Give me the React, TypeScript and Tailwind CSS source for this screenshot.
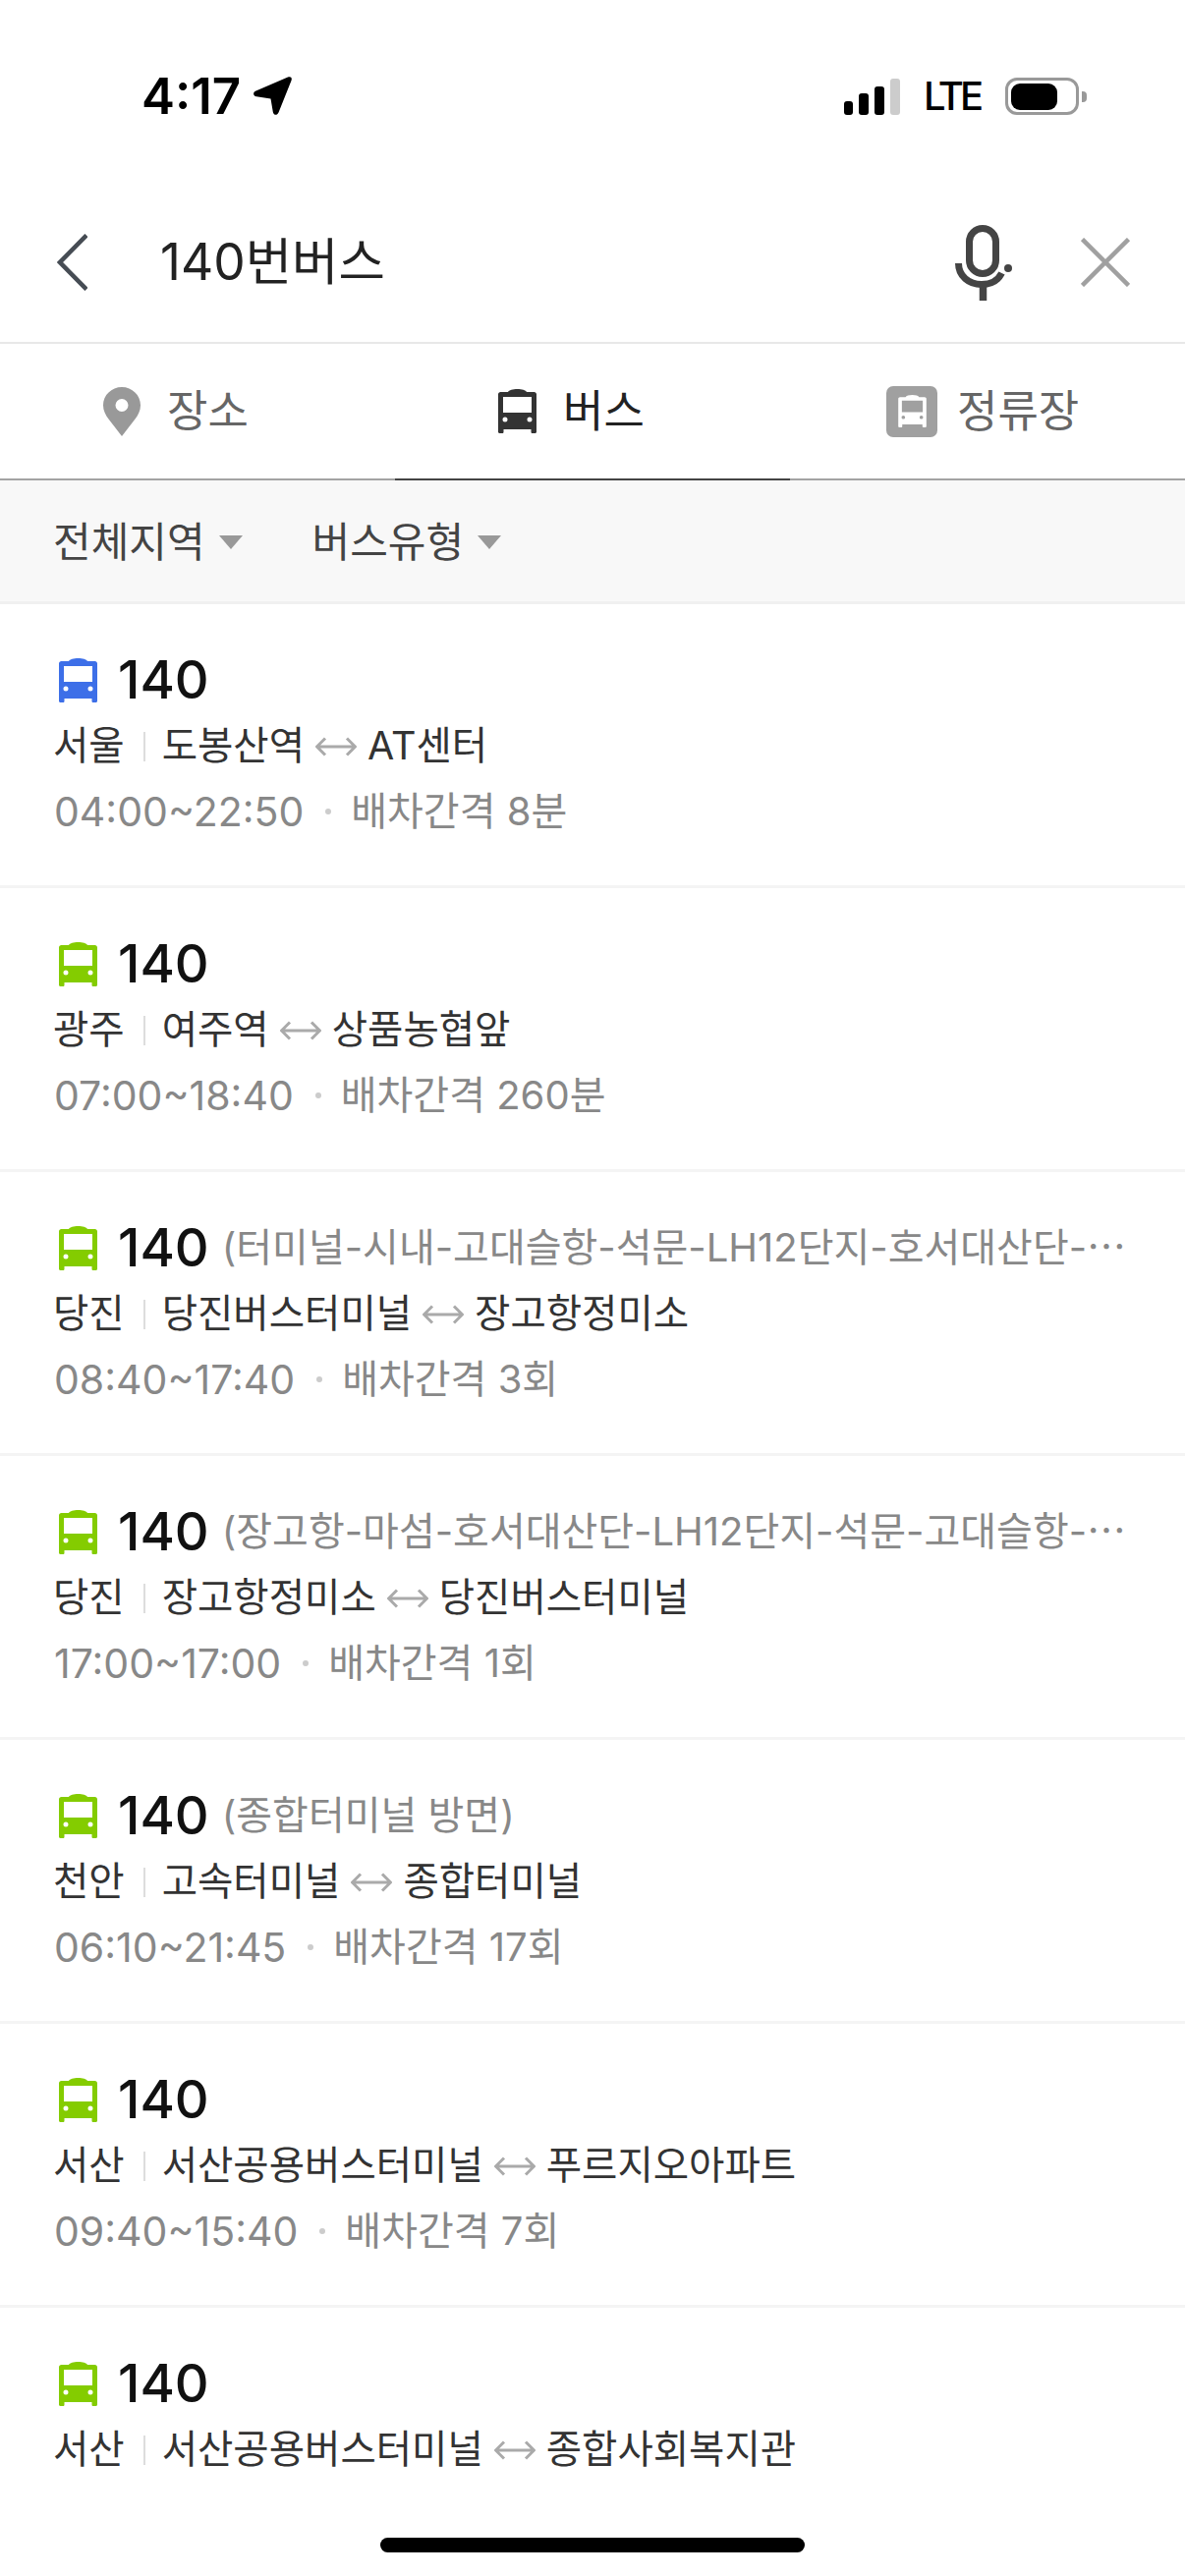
import React from 'react';

const FONT = 'font-[Inter,"Noto_Sans_CJK_KR",sans-serif]';

interface RouteRow {
  color: string;
  region: string;
  from: string;
  to: string;
  note?: string;
  time?: string;
  interval?: string;
}

const GREEN = 'text-[#84cc00]';

const rows: RouteRow[] = [
  { color: 'text-[#3d6fe8]', region: '서울', from: '도봉산역', to: 'AT센터', time: '04:00~22:50', interval: '배차간격 8분' },
  { color: GREEN, region: '광주', from: '여주역', to: '상품농협앞', time: '07:00~18:40', interval: '배차간격 260분' },
  {
    color: GREEN,
    region: '당진',
    from: '당진버스터미널',
    to: '장고항정미소',
    note: '(터미널-시내-고대슬항-석문-LH12단지-호서대산단-⋯',
    time: '08:40~17:40',
    interval: '배차간격 3회',
  },
  {
    color: GREEN,
    region: '당진',
    from: '장고항정미소',
    to: '당진버스터미널',
    note: '(장고항-마섬-호서대산단-LH12단지-석문-고대슬항-⋯',
    time: '17:00~17:00',
    interval: '배차간격 1회',
  },
  { color: GREEN, region: '천안', from: '고속터미널', to: '종합터미널', note: '(종합터미널 방면)', time: '06:10~21:45', interval: '배차간격 17회' },
  { color: GREEN, region: '서산', from: '서산공용버스터미널', to: '푸르지오아파트', time: '09:40~15:40', interval: '배차간격 7회' },
  { color: GREEN, region: '서산', from: '서산공용버스터미널', to: '종합사회복지관' },
];

const BusIcon = ({ className }: { className: string }) => (
  <svg viewBox="0 0 39 45" className={className} fill="currentColor">
    <path
      fillRule="evenodd"
      d="M0 5.5C0 4 1 3 2.5 3H10C11 1 15 0 19.5 0S28 1 29 3H36.5C38 3 39 4 39 5.5V43.5C39 44.5 38 45 37 45H35C34 45 33.5 44.5 33.5 43.5V41H5.5V43.5C5.5 44.5 5 45 4 45H2C1 45 0 44.5 0 43.5ZM5 8V24H34V8ZM7 28.5A2.5 2.5 0 1 0 7 33.5A2.5 2.5 0 1 0 7 28.5ZM32 28.5A2.5 2.5 0 1 0 32 33.5A2.5 2.5 0 1 0 32 28.5Z"
    />
  </svg>
);

const Caret = () => (
  <svg viewBox="0 0 24 14" className="w-[24px] h-[14px]" fill="#999999">
    <path d="M0 0H24L12 14Z" />
  </svg>
);

const StatusBar = () => (
  <div className="h-[188px] pt-[78px] pl-[144px] pr-[108px] flex items-start justify-between">
    <div className="flex items-center h-[39px] gap-[13px]">
      <span className="text-[51px] leading-none font-semibold text-black">4:17</span>
      <svg viewBox="0 0 39 39" className="w-[39px] h-[39px]" fill="#000000">
        <path d="M35 0.5C38 -0.5 39.5 1 38.5 4L25.5 36.5C24 39.8 20.5 39.5 19.8 36L17.5 22.5L3 20.2C-0.5 19.5 -1 16 2.5 14.5Z" />
      </svg>
    </div>
    <div className="flex items-center h-[39px]">
      <div className="flex items-end gap-[6px] h-[37px] w-[58px] mt-[1px]">
        <div className="w-[9px] h-[14px] rounded-[3px] bg-black" />
        <div className="w-[10px] h-[22px] rounded-[3px] bg-black" />
        <div className="w-[10px] h-[29px] rounded-[3px] bg-black" />
        <div className="w-[10px] h-[37px] rounded-[3px] bg-[#cccccc]" />
      </div>
      <span className="ml-[23px] w-[83px] text-[40px] leading-none font-medium tracking-[-4px] text-black">LTE</span>
      <div className="relative w-[75px] h-[38px] rounded-[12px] border-[3px] border-[#999999] p-[3px]">
        <div className="w-[47px] h-[27px] rounded-[9px] bg-black" />
        <div className="absolute left-[75px] top-[11px] w-[5px] h-[11px] rounded-r-[4px] bg-[#999999]" />
      </div>
    </div>
  </div>
);

const SearchBar = () => (
  <div className="h-[162px] border-b-2 border-[#e8e8e8] flex items-center pl-[58px] pr-[56px] pb-[2px]">
    <svg viewBox="0 0 31 58" className="w-[31px] h-[58px]" fill="none" stroke="#464c54" strokeWidth="4.5">
      <path d="M30 1.5L3 29L30 56.5" />
    </svg>
    <span className="ml-[74px] flex-1 text-[51.5px] leading-none text-[#222222]">140번버스</span>
    <svg viewBox="0 0 58 77" className="w-[58px] h-[77px]" fill="none" stroke="#444444">
      <rect x="14.5" y="3.5" width="27" height="46" rx="13.5" strokeWidth="7" />
      <path d="M3.5 39C3.5 52 14 60.5 27 60.5C37 60.5 44 56 47.5 49" strokeWidth="7" />
      <path d="M28.5 60V77" strokeWidth="7.5" />
      <circle cx="54" cy="44" r="4" fill="#444444" stroke="none" />
    </svg>
    <svg viewBox="0 0 50 50" className="ml-[70px] w-[50px] h-[50px]" fill="none" stroke="#a0a0a0" strokeWidth="4.5">
      <path d="M1.5 1.5L48.5 48.5M48.5 1.5L1.5 48.5" />
    </svg>
  </div>
);

const Tabs = () => (
  <div className="h-[139px] grid grid-cols-3 border-b-[2px] border-[#a3a3a3]">
    <div className="flex items-center pl-[105px] gap-[27px]">
      <svg viewBox="0 0 38 50" className="w-[38px] h-[50px]">
        <path
          fillRule="evenodd"
          fill="#999999"
          d="M19 0C8.5 0 0 8.2 0 18.5C0 24 2.5 28.5 5.5 32.5L19 50L32.5 32.5C35.5 28.5 38 24 38 18.5C38 8.2 29.5 0 19 0ZM19 12A6.5 6.5 0 1 1 19 25A6.5 6.5 0 1 1 19 12Z"
        />
      </svg>
      <span className="text-[45px] leading-none text-[#666666]">장소</span>
    </div>
    <div className="relative flex items-center pl-[105px] gap-[27px]">
      <BusIcon className="w-[39px] h-[45px] text-[#333333]" />
      <span className="text-[45px] leading-none text-[#222222]">버스</span>
      <div className="absolute left-0 right-0 -bottom-[2px] h-[2px] bg-[#444444]" />
    </div>
    <div className="flex items-center pl-[98px] gap-[20px]">
      <div className="w-[52px] h-[52px] rounded-[7px] bg-[#a0a0a0] flex items-center justify-center">
        <BusIcon className="w-[29px] h-[33px] text-white" />
      </div>
      <span className="text-[45px] leading-none text-[#666666]">정류장</span>
    </div>
  </div>
);

const Filters = () => (
  <div className="h-[126px] bg-[#f8f8f8] border-b-[3px] border-[#f0f0f0] flex items-center pl-[54px] pt-[3px]">
    <span className="text-[42px] leading-none text-[#444444]">전체지역</span>
    <div className="ml-[14px]">
      <Caret />
    </div>
    <span className="ml-[71px] text-[42px] leading-none text-[#444444]">버스유형</span>
    <div className="ml-[14px]">
      <Caret />
    </div>
  </div>
);

const Route = ({ row }: { row: RouteRow }) => (
  <div className="h-[289px] border-b-[3px] border-[#f4f4f4] pl-[54px] pr-[20px] pt-[47px]">
    <div className="h-[60px] flex items-center">
      <BusIcon className={`ml-[6px] w-[39px] h-[45px] shrink-0 ${row.color}`} />
      <span className="ml-[21px] shrink-0 text-[54px] leading-none font-medium text-[#111111]">140</span>
      {row.note && (
        <span className="ml-[13px] whitespace-nowrap text-[40px] leading-[60px] text-[#888888]">{row.note}</span>
      )}
    </div>
    <div className="mt-[8px] h-[60px] flex items-center text-[39.5px] leading-none text-[#333333]">
      <span>{row.region}</span>
      <div className="ml-[19px] mr-[17px] w-[2px] h-[30px] bg-[#dddddd]" />
      <span>{row.from}</span>
      <svg viewBox="0 0 42 22" className="ml-[11px] mr-[11px] w-[42px] h-[22px]" fill="none" stroke="#aaaaaa" strokeWidth="3">
        <path d="M2 11H40M10 2.5L1.5 11L10 19.5M32 2.5L40.5 11L32 19.5" />
      </svg>
      <span>{row.to}</span>
    </div>
    {row.time && (
      <div className="mt-[6px] h-[60px] flex items-center leading-none text-[#888888]">
        <span className="ml-[1px] text-[41px]">{row.time}</span>
        <div className="ml-[22px] mr-[20px] w-[6px] h-[6px] rounded-full bg-[#cccccc]" />
        <span className="text-[40px]">{row.interval}</span>
      </div>
    )}
  </div>
);

export default function App() {
  return (
    <div className={`relative h-[2622px] w-[1206px] overflow-hidden bg-white ${FONT}`}>
      <StatusBar />
      <SearchBar />
      <Tabs />
      <Filters />
      {rows.map((row, i) => (
        <Route key={i} row={row} />
      ))}
      {/* home indicator */}
      <div className="absolute left-[387px] top-[2583px] w-[432px] h-[15px] rounded-full bg-black" />
    </div>
  );
}
